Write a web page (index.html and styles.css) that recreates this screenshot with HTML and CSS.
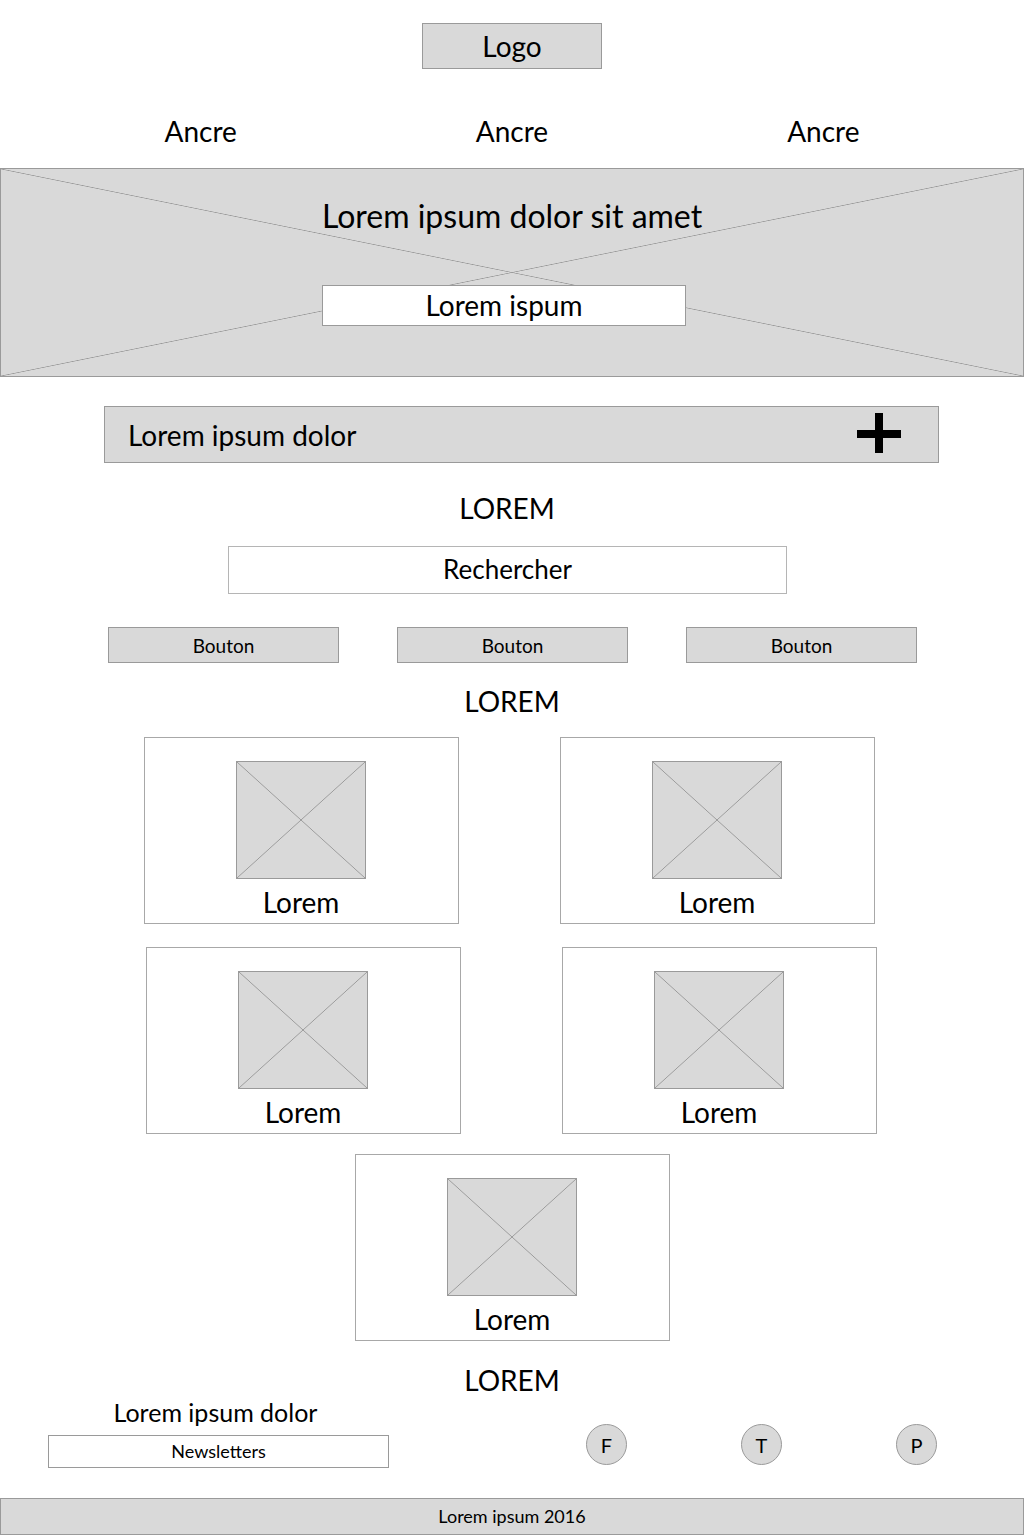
FILE: index.html
```html
<!DOCTYPE html>
<html lang="fr">
<head>
    <meta charset="UTF-8">
    <meta name="viewport" content="width=device-width, initial-scale=1.0">
    <title>Maquette</title>
    <link rel="stylesheet" href="styles.css">
</head>
<body>
    <header class="header">
        <div class="logo">Logo</div>
        <nav class="nav">
            <a href="#">Ancre</a>
            <a href="#">Ancre</a>
            <a href="#">Ancre</a>
        </nav>
    </header>

    <section class="hero placeholder">
        <h1 class="hero-title">Lorem ipsum dolor sit amet</h1>
        <div class="hero-box">Lorem ispum</div>
    </section>

    <div class="accordion">
        <span>Lorem ipsum dolor</span>
        <svg class="plus" width="44" height="40" viewBox="0 0 44 40">
            <rect x="0" y="17" width="44" height="8" fill="#000"/>
            <rect x="18" y="0" width="8" height="40" fill="#000"/>
        </svg>
    </div>

    <h2 class="section-title first">LOREM</h2>
    <div class="search">Rechercher</div>
    <div class="buttons">
        <button class="button">Bouton</button>
        <button class="button">Bouton</button>
        <button class="button">Bouton</button>
    </div>

    <h2 class="section-title second">LOREM</h2>
    <div class="cards">
        <div class="card-row row-1">
            <div class="card"><div class="thumb placeholder"></div><p>Lorem</p></div>
            <div class="card"><div class="thumb placeholder"></div><p>Lorem</p></div>
        </div>
        <div class="card-row row-2">
            <div class="card"><div class="thumb placeholder"></div><p>Lorem</p></div>
            <div class="card"><div class="thumb placeholder"></div><p>Lorem</p></div>
        </div>
        <div class="card-row row-3">
            <div class="card"><div class="thumb placeholder"></div><p>Lorem</p></div>
        </div>
    </div>

    <h2 class="section-title third">LOREM</h2>
    <div class="bottom">
        <div class="newsletter">
            <p>Lorem ipsum dolor</p>
            <div class="newsletter-box">Newsletters</div>
        </div>
        <div class="social">
            <span class="circle">F</span>
            <span class="circle">T</span>
            <span class="circle">P</span>
        </div>
    </div>

    <footer class="footer">Lorem ipsum 2016</footer>
</body>
</html>
```

FILE: styles.css
```css
* {
    box-sizing: border-box;
}
body {
    margin: 0;
    font-family: Lato, "Liberation Sans", sans-serif;
    color: #000;
    background: #fff;
}
h1, h2, p {
    margin: 0;
    font-weight: 400;
}
.placeholder {
    background:
        linear-gradient(to top right, transparent calc(50% - 0.7px), #9a9a9a 50%, transparent calc(50% + 0.7px)),
        linear-gradient(to bottom right, transparent calc(50% - 0.7px), #9a9a9a 50%, transparent calc(50% + 0.7px)),
        #d9d9d9;
    border: 1px solid #9a9a9a;
}
.logo {
    width: 180px;
    height: 46px;
    margin: 23px auto 0;
    background: #d9d9d9;
    border: 1px solid #9a9a9a;
    font-size: 28px;
    line-height: 44px;
    text-align: center;
}
.nav {
    width: 934px;
    margin: 47px auto 0;
    display: grid;
    grid-template-columns: repeat(3, 1fr);
    text-align: center;
}
.nav a {
    color: #000;
    text-decoration: none;
    font-size: 28px;
    line-height: 30px;
}
.hero {
    margin-top: 22px;
    height: 209px;
    padding-top: 27px;
}
.hero-title {
    font-size: 32px;
    line-height: 40px;
    text-align: center;
}
.hero-box {
    width: 364px;
    height: 41px;
    margin: 49px 0 0 321px;
    background: #fff;
    border: 1px solid #9a9a9a;
    font-size: 28px;
    line-height: 38px;
    text-align: center;
}
.accordion {
    width: 835px;
    height: 57px;
    margin: 29px 0 0 104px;
    padding: 0 37px 0 23px;
    display: flex;
    align-items: center;
    justify-content: space-between;
    background: #d9d9d9;
    border: 1px solid #9a9a9a;
    font-size: 28px;
}
.plus {
    margin-top: -3px;
}
.section-title {
    font-size: 28px;
    line-height: 30px;
    text-align: center;
}
.section-title.first {
    margin-top: 30px;
    padding-right: 10px;
}
.section-title.second {
    margin-top: 23px;
}
.section-title.third {
    margin-top: 24px;
}
.search {
    width: 559px;
    height: 48px;
    margin: 23px 0 0 228px;
    border: 1px solid #b5b5b5;
    font-size: 26px;
    line-height: 45px;
    text-align: center;
}
.buttons {
    display: flex;
    gap: 58px;
    margin: 33px 0 0 108px;
}
.button {
    width: 231px;
    height: 36px;
    padding: 0;
    background: #d9d9d9;
    border: 1px solid #9a9a9a;
    border-radius: 0;
    font-family: inherit;
    font-size: 19px;
    color: #000;
}
.cards {
    margin-top: 21px;
}
.card-row {
    display: flex;
    justify-content: center;
    gap: 101px;
}
.row-1 {
    padding-right: 6px;
}
.row-2 {
    margin-top: 23px;
    padding-right: 2px;
}
.row-3 {
    margin-top: 20px;
}
.card {
    width: 315px;
    height: 187px;
    border: 1px solid #a8a8a8;
    padding-top: 23px;
    display: flex;
    flex-direction: column;
    align-items: center;
}
.thumb {
    width: 130px;
    height: 118px;
}
.card p {
    margin-top: 8px;
    font-size: 28px;
    line-height: 30px;
}
.bottom {
    display: flex;
    align-items: flex-start;
    margin-top: 2px;
}
.newsletter {
    margin-left: 48px;
    width: 341px;
    text-align: center;
}
.newsletter p {
    font-size: 25px;
    line-height: 30px;
    padding-right: 6px;
}
.newsletter-box {
    height: 33px;
    margin-top: 8px;
    border: 1px solid #9a9a9a;
    font-size: 18px;
    line-height: 30px;
}
.social {
    display: flex;
    gap: 114px;
    margin: 27px 0 0 197px;
}
.circle {
    width: 41px;
    height: 41px;
    border-radius: 50%;
    background: #d9d9d9;
    border: 1px solid #9a9a9a;
    display: flex;
    align-items: center;
    justify-content: center;
    font-size: 20px;
}
.footer {
    margin-top: 30px;
    height: 37px;
    background: #d9d9d9;
    border: 1px solid #9a9a9a;
    font-size: 18px;
    line-height: 35px;
    text-align: center;
}
```
